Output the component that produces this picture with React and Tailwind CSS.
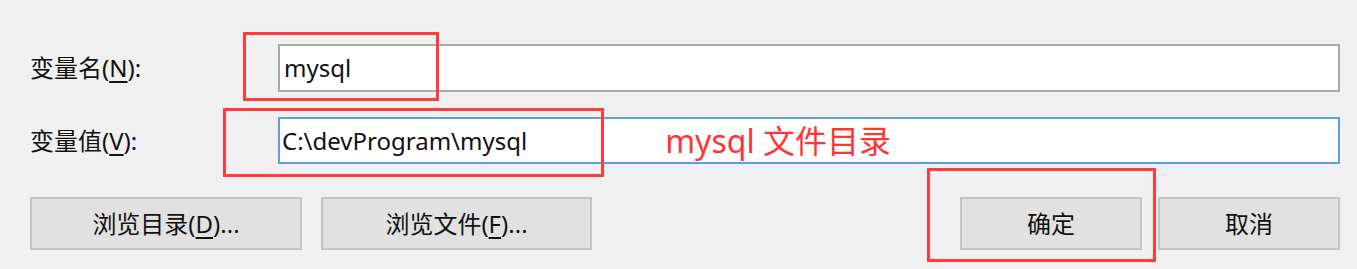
import React from "react";

const font = { fontFamily: '"Noto Sans", "Noto Sans CJK SC", sans-serif' };

function Btn({ width, children }) {
  return (
    <button
      className={`h-[53px] ${width} bg-[#e1e1e1] border-2 border-[#c4c4c4] text-[24px] text-[#111] flex items-center justify-center`}
    >
      {children}
    </button>
  );
}

export default function App() {
  return (
    <div
      className="relative w-[1357px] h-[269px] bg-[#f0f0f0] pt-[44px] pl-[30px] pr-[17px] text-[#111] overflow-hidden"
      style={font}
    >
      {/* Variable name */}
      <div className="flex items-center h-[48px]">
        <div className="w-[248px] text-[24px] leading-none">
          变量名(<span className="underline underline-offset-4">N</span>):
        </div>
        <div className="flex-1 h-full bg-white border-2 border-[#a8a8a8] flex items-center pl-[4px] text-[24px]">
          mysql
        </div>
      </div>

      {/* Variable value */}
      <div className="flex items-center h-[47px] mt-[25px]">
        <div className="w-[248px] text-[24px] leading-none">
          变量值(<span className="underline underline-offset-4">V</span>):
        </div>
        <div className="flex-1 h-full bg-white border-2 border-[#5aa0e0] flex items-center pl-[2px] text-[24px]">
          C:\devProgram\mysql
          <span className="ml-[138px] text-[32px] text-[#ff3535]">mysql 文件目录</span>
        </div>
      </div>

      {/* Buttons */}
      <div className="flex mt-[33px]">
        <Btn width="w-[272px]">
          浏览目录(<span className="underline underline-offset-4">D</span>)...
        </Btn>
        <div className="ml-[19px]">
          <Btn width="w-[271px]">
            浏览文件(<span className="underline underline-offset-4">F</span>)...
          </Btn>
        </div>
        <div className="ml-auto flex gap-[16px]">
          <Btn width="w-[182px]">确定</Btn>
          <Btn width="w-[182px]">取消</Btn>
        </div>
      </div>

      {/* red annotation boxes */}
      <div className="absolute left-[243px] top-[32px] w-[196px] h-[69px] border-[3px] border-[#ff3b3b]" />
      <div className="absolute left-[223px] top-[108px] w-[381px] h-[69px] border-[3px] border-[#ff3b3b]" />
      <div className="absolute left-[927px] top-[168px] w-[229px] h-[94px] border-[3px] border-[#ff3b3b]" />
    </div>
  );
}
